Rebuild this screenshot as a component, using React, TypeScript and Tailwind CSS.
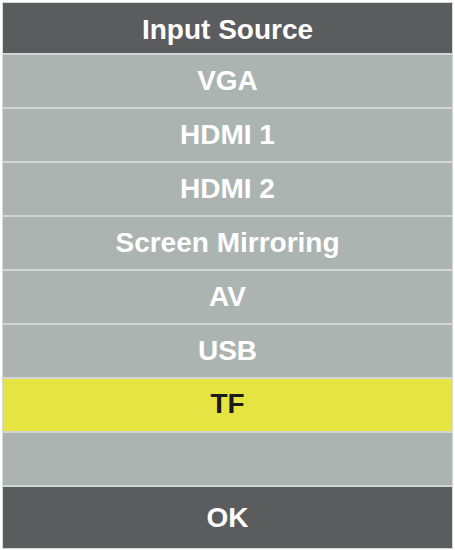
import React from "react";

const items = ["VGA", "HDMI 1", "HDMI 2", "Screen Mirroring", "AV", "USB", "TF", ""];

export default function App() {
  return (
    <div
      className="w-[455px] h-[550px] bg-white pt-[3px] px-[3px] pb-[2px]"
      style={{ fontFamily: '"Liberation Sans", Arial, sans-serif' }}
    >
      <div className="flex flex-col w-[449px] h-[545px] outline outline-1 outline-[#d6d8d8]">
        <div className="h-[50px] bg-[#5b5c5e] flex items-center justify-center text-white font-bold text-[28px] pt-[3px]">
          Input Source
        </div>
        {items.map((it, i) => {
          const sel = it === "TF";
          return (
            <div
              key={i}
              className={
                sel
                  ? "h-[54px] border-t-2 border-[#cfd6d4] bg-[#e6e443] flex items-center justify-center text-[#1b1b1b] font-bold text-[28px] pb-[2px]"
                  : "h-[54px] border-t-2 border-[#cfd6d4] bg-[#acb4b2] flex items-center justify-center text-white font-bold text-[28px]"
              }
            >
              {it}
            </div>
          );
        })}
        <div className="flex-1 border-t-2 border-[#cfd6d4] bg-[#5b5c5e] flex items-center justify-center text-white font-bold text-[28px] pt-[1px]">
          OK
        </div>
      </div>
    </div>
  );
}
